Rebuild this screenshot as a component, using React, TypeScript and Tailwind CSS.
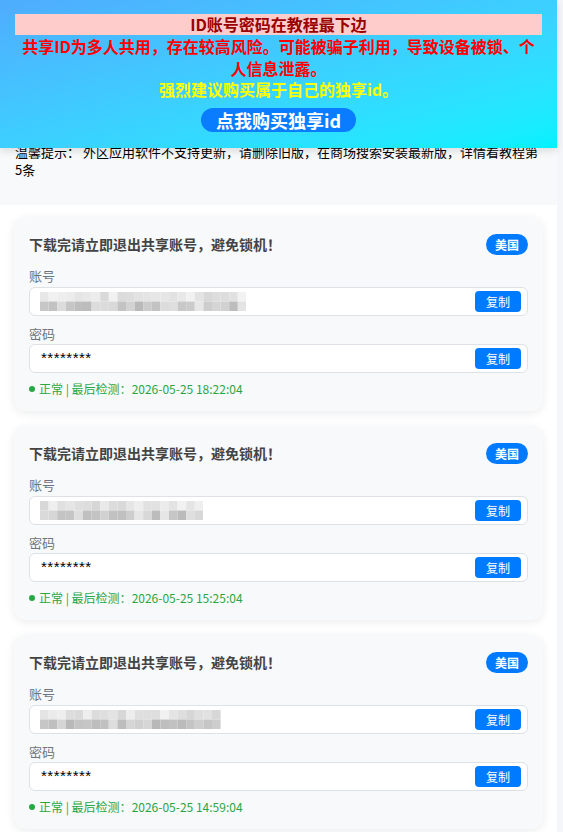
import React from "react";

const accounts = [
  { time: "2026-05-25 18:22:04", cols: 24, seed: 3 },
  { time: "2026-05-25 15:25:04", cols: 19, seed: 7 },
  { time: "2026-05-25 14:59:04", cols: 21, seed: 11 },
];

// pixelated redaction over the account name
function Mosaic({ cols, seed }: { cols: number; seed: number }) {
  let s = seed * 1013;
  const rnd = () => {
    s = (s * 9301 + 49297) % 233280;
    return s / 233280;
  };
  const cw = 8.6;
  const ch = 9.5;
  const cells: React.ReactNode[] = [];
  for (let r = 0; r < 2; r++) {
    for (let c = 0; c < cols; c++) {
      const v = r === 0 ? Math.round(242 - rnd() * 28) : Math.round(232 - rnd() * 50);
      cells.push(<rect key={`${r}-${c}`} x={c * cw} y={r * ch} width={cw} height={ch} fill={`rgb(${v},${v},${v})`} />);
    }
  }
  return (
    <svg width={cols * cw} height={ch * 2} className="block">
      {cells}
    </svg>
  );
}

function CopyButton() {
  return (
    <button className="ml-auto flex h-[21px] w-[46px] items-center justify-center rounded-[4px] bg-[#007bff] text-[12px] text-white">
      复制
    </button>
  );
}

function AccountCard({ time, cols, seed }: { time: string; cols: number; seed: number }) {
  return (
    <div className="mb-[15px] rounded-[12px] bg-[#f8f9fa] px-[15px] pt-[15px] pb-[14px] shadow-[0_2px_10px_rgba(0,0,0,0.08)]">
      <div className="flex h-[25px] items-center justify-between">
        <h3 className="text-[14px] font-bold text-[#444]">下载完请立即退出共享账号，避免锁机！</h3>
        <span className="flex h-[21px] w-[42px] items-center justify-center rounded-full bg-[#007bff] text-[12px] font-bold text-white">
          美国
        </span>
      </div>
      <div className="mt-[10px] h-[18px] text-[13px] leading-[18px] text-[#6c757d]">账号</div>
      <div className="mt-[2px] flex h-[29px] items-center rounded-[6px] border border-[#dee2e6] bg-white pr-[6px] pl-[10px]">
        <Mosaic cols={cols} seed={seed} />
        <CopyButton />
      </div>
      <div className="mt-[9px] h-[18px] text-[13px] leading-[18px] text-[#6c757d]">密码</div>
      <div className="mt-[1px] flex h-[29px] items-center rounded-[6px] border border-[#dee2e6] bg-white pr-[6px] pl-[11px]">
        <span className="font-[Liberation_Sans,sans-serif] text-[15px] tracking-[0.5px] text-black">********</span>
        <CopyButton />
      </div>
      <div className="mt-[8px] flex h-[16px] items-center gap-[4px] text-[12px] text-[#28a745]">
        <span className="h-[6px] w-[6px] rounded-full bg-[#28a745]" />
        <span>正常 | 最后检测：{time}</span>
      </div>
    </div>
  );
}

export default function App() {
  return (
    <div className="flex min-h-[832px] bg-[#f5f6fa] font-[Noto_Sans_CJK_SC,Noto_Sans,sans-serif]">
      <div className="relative w-[557px] bg-white">
        {/* fixed top banner */}
        <div className="absolute top-0 left-0 z-10 w-full bg-linear-to-br from-[#4facfe] to-[#00f2fe] px-[15px] pt-[14px] pb-[15px] text-center shadow-[0_3px_8px_rgba(0,0,0,0.12)]">
          <div className="h-[21px] bg-[#ffcccc] text-[16px] leading-[21px] font-bold text-[#990000]">ID账号密码在教程最下边</div>
          <p className="text-[16px] leading-[22px] font-bold text-[#ff0000]">
            共享ID为多人共用，存在较高风险。可能被骗子利用，导致设备被锁、个人信息泄露。
          </p>
          <p className="text-[16px] leading-[20px] font-bold text-[#ffff00]">强烈建议购买属于自己的独享id。</p>
          <button className="mt-[9px] h-[24px] rounded-full bg-[#0a7cff] px-[15px] text-[18px] leading-[24px] font-bold text-white">
            点我购买独享id
          </button>
        </div>

        <div className="bg-[#f8f9fa] px-[15px] pt-[143px] pb-[26px]">
          <p className="text-[13px] leading-[18px] text-black">
            温馨提示： 外区应用软件不支持更新，请删除旧版，在商场搜索安装最新版，详情看教程第5条
          </p>
        </div>

        <div className="bg-white px-[14px] pt-[12px] pb-[4px]">
          {accounts.map((a) => (
            <AccountCard key={a.time} {...a} />
          ))}
        </div>
      </div>
      <div className="w-[6px]" />
    </div>
  );
}
